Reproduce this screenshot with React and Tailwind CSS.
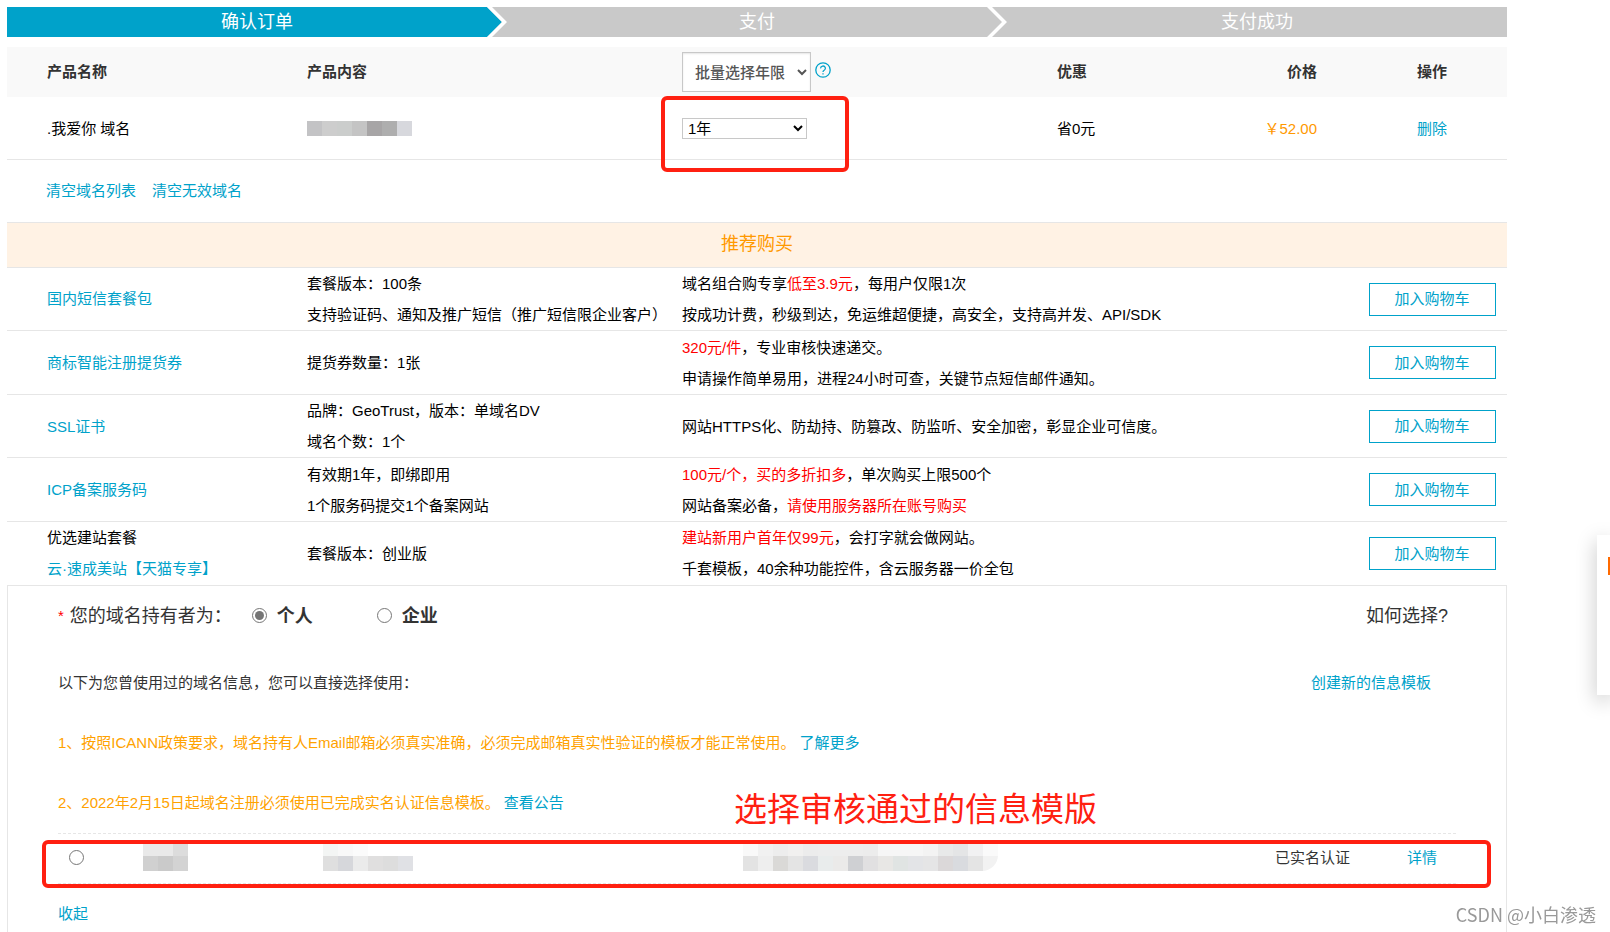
import React, { useState } from 'react';

const steps = [
  { label: '确认订单', active: true },
  { label: '支付', active: false },
  { label: '支付成功', active: false },
];

const Hot = ({ children }) => <span className="text-[#ff0000]">{children}</span>;

const recommended = [
  {
    id: 'sms',
    name: '国内短信套餐包',
    content: ['套餐版本：100条', '支持验证码、通知及推广短信（推广短信限企业客户）'],
    desc: [
      <>域名组合购专享<Hot>低至3.9元</Hot>，每用户仅限1次</>,
      '按成功计费，秒级到达，免运维超便捷，高安全，支持高并发、API/SDK',
    ],
  },
  {
    id: 'trademark',
    name: '商标智能注册提货券',
    content: ['提货券数量：1张'],
    desc: [
      <><Hot>320元/件</Hot>，专业审核快速递交。</>,
      '申请操作简单易用，进程24小时可查，关键节点短信邮件通知。',
    ],
  },
  {
    id: 'ssl',
    name: 'SSL证书',
    content: ['品牌：GeoTrust，版本：单域名DV', '域名个数：1个'],
    desc: ['网站HTTPS化、防劫持、防篡改、防监听、安全加密，彰显企业可信度。'],
  },
  {
    id: 'icp',
    name: 'ICP备案服务码',
    content: ['有效期1年，即绑即用', '1个服务码提交1个备案网站'],
    desc: [
      <><Hot>100元/个，买的多折扣多</Hot>，单次购买上限500个</>,
      <>网站备案必备，<Hot>请使用服务器所在账号购买</Hot></>,
    ],
  },
  {
    id: 'site',
    title: '优选建站套餐',
    name: '云·速成美站【天猫专享】',
    content: ['套餐版本：创业版'],
    desc: [
      <><Hot>建站新用户首年仅99元</Hot>，会打字就会做网站。</>,
      '千套模板，40余种功能控件，含云服务器一价全包',
    ],
  },
];

const Link = ({ children, className = '' }) => (
  <a href="#" className={`text-[#00a2ca] hover:underline ${className}`}>{children}</a>
);

// Hidden values are drawn as rows of 15px tiles
const Mosaic = ({ rows, className = '' }) => (
  <span className={`flex flex-col overflow-hidden ${className}`} aria-hidden="true">
    {rows.map((row, i) => (
      <span key={i} className={i < rows.length - 1 ? 'flex h-3' : 'flex h-[15px]'}>
        {row.map((color, j) => (
          <span key={j} className="w-[15px]" style={{ backgroundColor: color }} />
        ))}
      </span>
    ))}
  </span>
);

const StepBar = () => (
  <ol className="flex h-[30px] text-lg text-white">
    {steps.map((step, i) => (
      <li
        key={step.label}
        className={`relative flex flex-1 items-center justify-center ${step.active ? 'bg-[#00a2ca]' : 'bg-[#c9c9c9]'}`}
      >
        {step.label}
        {i < steps.length - 1 && (
          <svg className="absolute right-0 top-0 h-[30px] w-5" viewBox="0 0 20 30" aria-hidden="true">
            <path d="M0 0H20V30H0L15 15Z" fill="#c9c9c9" />
            <path d="M0 0H5L20 15L5 30H0L15 15Z" fill="#fff" />
          </svg>
        )}
      </li>
    ))}
  </ol>
);

const OrderTable = () => {
  const [years, setYears] = useState('1');

  return (
    <table className="mt-2.5 w-full table-fixed border-collapse text-left">
      <colgroup>
        <col className="w-[20%]" />
        <col className="w-[25%]" />
        <col className="w-[25%]" />
        <col className="w-[10%]" />
        <col className="w-[10%]" />
        <col className="w-[10%]" />
      </colgroup>
      <thead className="bg-[#f9f9f9] text-[#333]">
        <tr className="h-[50px]">
          <th className="pl-10">产品名称</th>
          <th>产品内容</th>
          <th>
            <div className="flex items-center gap-1">
              <select
                aria-label="批量选择年限"
                className="h-10 w-[129px] border border-[#c8c8c8] bg-white pl-2 font-medium text-[#555] shadow-[inset_0_1px_2px_rgba(0,0,0,0.1)]"
              >
                <option>批量选择年限</option>
              </select>
              <svg className="mb-1 size-4" viewBox="0 0 16 16" fill="none" stroke="#00a2ca" strokeWidth="1.3" aria-hidden="true">
                <circle cx="8" cy="8" r="7.2" />
                <path d="M5.6 6.4a2.4 2.3 0 1 1 3.6 1.9C8.4 8.8 8 9.1 8 10" />
                <path d="M8 11.2v1.4" />
              </svg>
            </div>
          </th>
          <th>优惠</th>
          <th className="pr-10 text-right">价格</th>
          <th className="text-center">操作</th>
        </tr>
      </thead>
      <tbody>
        <tr className="h-[62px] border-b border-[#e6e6e6] *:pt-0.5">
          <td className="pl-10">.我爱你 域名</td>
          <td>
            <Mosaic
              rows={[['#c3c3c5', '#cdcdcd', '#cbcdcc', '#c4c4c4', '#a7a5a6', '#aeaeae', '#d7d8dd']]}
            />
          </td>
          <td>
            <div className="relative flex">
              <select
                aria-label="年限"
                value={years}
                onChange={(e) => setYears(e.target.value)}
                className="h-[21px] w-[125px] border border-[#c8c8c8] bg-white pl-px"
              >
                <option value="1">1年</option>
                <option value="2">2年</option>
                <option value="3">3年</option>
              </select>
              <div className="pointer-events-none absolute -left-[21px] -top-[22px] h-[76px] w-[188px] rounded-md border-4 border-[#ff2011]" />
            </div>
          </td>
          <td>省0元</td>
          <td className="pr-10 text-right text-[#ff9900]">￥52.00</td>
          <td className="text-center"><Link>删除</Link></td>
        </tr>
      </tbody>
    </table>
  );
};

const RecommendTable = () => (
  <table className="w-full table-fixed border-collapse leading-[31px]">
    <caption className="h-[46px] border-y border-[#e6e6e6] bg-[#fff2e4] text-lg leading-[42px] text-[#ff9900]">
      推荐购买
    </caption>
    <colgroup>
      <col className="w-[20%]" />
      <col className="w-[25%]" />
      <col className="w-[45%]" />
      <col className="w-[10%]" />
    </colgroup>
    <tbody>
      {recommended.map((item) => (
        <tr key={item.id} className="h-[63px] border-b border-[#e6e6e6] last:border-b-0 even:h-16">
          <td className="pl-10">
            {item.title && <div>{item.title}</div>}
            <Link>{item.name}</Link>
          </td>
          <td className="whitespace-nowrap">
            {item.content.map((line, i) => <div key={i}>{line}</div>)}
          </td>
          <td>
            {item.desc.map((line, i) => <div key={i}>{line}</div>)}
          </td>
          <td className="text-center">
            <button className="h-[33px] w-[127px] border border-[#00a2ca] bg-white text-[#00a2ca] align-middle leading-5">
              加入购物车
            </button>
          </td>
        </tr>
      ))}
    </tbody>
  </table>
);

const OwnerPanel = () => {
  const [owner, setOwner] = useState('person');
  const [template, setTemplate] = useState(false);

  return (
    <section className="h-[348px] border border-b-0 border-[#e6e6e6] pl-[50px] text-[#333]">
      <div className="flex h-[60px] items-center pr-[58px] text-lg">
        <span className="mr-1.5 text-[15px] text-[#ff0000]">*</span>
        <span className="w-[182px]">您的域名持有者为：</span>
        <label className="flex w-[125px] items-center gap-2.5 font-bold">
          <input
            type="radio"
            name="owner"
            className="size-[15px] accent-[#757575]"
            checked={owner === 'person'}
            onChange={() => setOwner('person')}
          />
          个人
        </label>
        <label className="flex items-center gap-2.5 font-bold">
          <input
            type="radio"
            name="owner"
            className="size-[15px] accent-[#757575]"
            checked={owner === 'company'}
            onChange={() => setOwner('company')}
          />
          企业
        </label>
        <span className="ml-auto">如何选择?</span>
      </div>

      <div className="flex h-[75px] items-center justify-between pr-[75px]">
        <p>以下为您曾使用过的域名信息，您可以直接选择使用：</p>
        <Link>创建新的信息模板</Link>
      </div>

      <div className="flex h-[45px] items-center gap-1 text-[#ffa200]">
        <p>1、按照ICANN政策要求，域名持有人Email邮箱必须真实准确，必须完成邮箱真实性验证的模板才能正常使用。</p>
        <Link>了解更多</Link>
      </div>
      <div className="relative flex h-[67px] items-end gap-1 pb-5 text-[#ffa200]">
        <p>2、2022年2月15日起域名注册必须使用已完成实名认证信息模板。</p>
        <Link>查看公告</Link>
        <span className="absolute left-[676px] top-5 whitespace-nowrap text-[33px] leading-[48px] text-[#ff2011]">
          选择审核通过的信息模版
        </span>
      </div>

      <div className="relative mr-[50px]">
        <div className="flex h-[51px] items-center border-y border-dashed border-[#e6e6e6] pl-[11px]">
          <input
            type="radio"
            name="template"
            aria-label="选择信息模板"
            className="mb-0.5 size-[15px] accent-[#757575]"
            checked={template}
            onChange={() => setTemplate(true)}
          />
          <Mosaic
            className="mb-0.5 ml-[59px]"
            rows={[
              ['#e9e9e9', '#e9e9e9', '#dcdcdc'],
              ['#d0d0d0', '#cacaca', '#d3d3d3'],
            ]}
          />
          <Mosaic
            className="mb-0.5 ml-[135px]"
            rows={[
              ['#f3f5f4', '#f8f8f8', '#fbfbfb'],
              ['#dfdfdf', '#d6d7db', '#ebebeb', '#e0dfdf', '#dddddd', '#e0e1e5'],
            ]}
          />
          <Mosaic
            className="mb-0.5 ml-[330px] rounded-br-2xl"
            rows={[
              ['#f9f9f9', '#f1f1f1', '#ededed', '#f1f0ef', '#ececec', '#ededed', '#ededed', '#ededed', '#ececec', '#f6f6f6', '#f6f6f6', '#f6f6f6', '#f3f3f3', '#e8e9e9', '#e4e5e6', '#f1f1f2', '#fafafa'],
              ['#e3e3e3', '#eeeeee', '#dad9d7', '#e4e4e4', '#dadbdf', '#e9ecec', '#ebeae9', '#cfd0d3', '#e1e0e1', '#e8e7e5', '#e0e4e3', '#e3e4e7', '#e5e5e6', '#dbd8d9', '#d9dbdf', '#e4e4e4', '#f2f2f2'],
            ]}
          />
          <span className="ml-auto">已实名认证</span>
          <Link className="ml-[57px] mr-[19px]">详情</Link>
        </div>
        <div className="pointer-events-none absolute -left-4 -right-[35px] top-[7px] h-12 rounded-md border-4 border-[#ff2011]" />
      </div>

      <div className="flex h-[60px] items-center">
        <Link>收起</Link>
      </div>
    </section>
  );
};

export default function App() {
  return (
    <div className="relative overflow-hidden bg-white pl-[7px] pr-[103px] pt-[7px] font-['Liberation_Sans','Noto_Sans_CJK_SC',sans-serif] text-[15px] leading-5 text-black">
      <StepBar />
      <OrderTable />
      <div className="flex h-[62px] items-center gap-4 pl-[39px]">
        <Link>清空域名列表</Link>
        <Link>清空无效域名</Link>
      </div>
      <RecommendTable />
      <OwnerPanel />

      <aside className="fixed right-0 top-[535px] h-40 w-[13px] bg-white pt-[22px] shadow-[0_6px_20px_rgba(0,0,0,0.25)]">
        <div className="ml-auto h-[18px] w-0.5 bg-[#ff6a00]" />
      </aside>
      <span className="fixed bottom-1 right-3.5 font-['Noto_Sans_CJK_SC',sans-serif] text-lg text-[#999]">
        CSDN @小白渗透
      </span>
    </div>
  );
}
